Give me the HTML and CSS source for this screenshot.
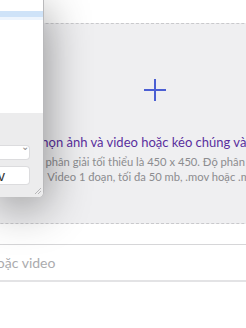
FILE: index.html
```html
<!DOCTYPE html>
<html lang="vi">
<head>
	<meta charset="UTF-8">
	<title>Tải ảnh và video</title>
	<link rel="stylesheet" href="styles.css">
</head>
<body>
<div class="page">
	<div class="dropzone">
		<svg class="plus" width="22" height="22" viewBox="0 0 22 22">
			<path d="M11 0V22M0 11H22" stroke="#4b5fd3" stroke-width="2"/>
		</svg>
		<p class="title">Chọn ảnh và video hoặc kéo chúng vào đây</p>
		<p class="hint">phân giải tối thiểu là 450 x 450. Độ phân giải</p>
		<p class="hint">Video 1 đoạn, tối đa 50 mb, .mov hoặc .mp4</p>
	</div>
	<div class="caption">
		<span class="placeholder">Thêm mô tả hoặc video</span>
	</div>
</div>

<div class="dialog">
	<div class="files">
		<div class="row selected"></div>
	</div>
	<div class="options">
		<div class="select"><span class="chev">&#8964;</span></div>
		<div class="name">v</div>
		<div class="grip"></div>
	</div>
</div>
</body>
</html>
```

FILE: styles.css
```css
html, body{
	margin: 0;
	overflow: hidden;
	background: #fff;
	font-family: Lato, "Noto Sans", sans-serif;
}
.page{
	width: 510px;
	margin-left: -100px;
	padding-top: 23px;
}
.dropzone{
	border: 1px dashed #c9c9cc;
	background: #efeff1;
	display: flex;
	flex-direction: column;
	align-items: center;
	padding-top: 55px;
	box-sizing: border-box;
	height: 201px;
}
.plus{
	display: block;
}
.title{
	margin: 32px 0 0;
	font-size: 13px;
	line-height: 18px;
	color: #5a2f9e;
	white-space: nowrap;
}
.hint{
	margin: 0;
	font-size: 11.2px;
	line-height: 15px;
	color: #8c8c8f;
	white-space: nowrap;
}
.title + .hint{
	margin-top: 3px;
}
.caption{
	margin-top: 20px;
	height: 35px;
	border-top: 1px solid #d6d6d8;
	border-bottom: 2px solid #e3e3e5;
	display: flex;
	align-items: center;
	padding-left: 12px;
}
.placeholder{
	font-size: 14px;
	color: #ababae;
}

/* floating file picker */
.dialog{
	position: absolute;
	left: 0;
	top: 0;
	width: 44px;
	height: 197px;
	background: #fff;
	border-right: 1px solid #b9b9bb;
	border-bottom-right-radius: 5px;
	box-shadow: 0 10px 46px rgba(0,0,0,.45);
	display: flex;
	flex-direction: column;
	overflow: hidden;
	box-sizing: border-box;
}
.files{
	height: 113px;
	padding-top: 11px;
	box-sizing: border-box;
	background: #fff;
}
.row.selected{
	height: 6px;
	background: #cfe3f8;
	border-bottom: 3px solid #eef5fd;
}
.options{
	flex: 1;
	background: #ececed;
	display: flex;
	flex-direction: column;
	padding-top: 32px;
	position: relative;
}
.select, .name{
	width: 30px;
	background: #fff;
	border: 1px solid #dcdcde;
	border-left: none;
	border-radius: 0 4px 4px 0;
	box-sizing: border-box;
}
.select{
	height: 15px;
	position: relative;
}
.chev{
	position: absolute;
	left: 21px;
	top: -5px;
	font-size: 10px;
	color: #8a8a8a;
	font-family: "DejaVu Sans", sans-serif;
}
.name{
	height: 19px;
	margin-top: 6px;
	font-size: 14px;
	line-height: 18px;
	color: #333;
	text-indent: -2px;
	font-family: "Liberation Sans", sans-serif;
}
.grip{
	position: absolute;
	right: 2px;
	bottom: 3px;
	width: 6px;
	height: 6px;
	background: linear-gradient(135deg, transparent 45%, #b6b6b8 45%, #b6b6b8 55%, transparent 55%, transparent 70%, #b6b6b8 70%, #b6b6b8 80%, transparent 80%);
}
```
